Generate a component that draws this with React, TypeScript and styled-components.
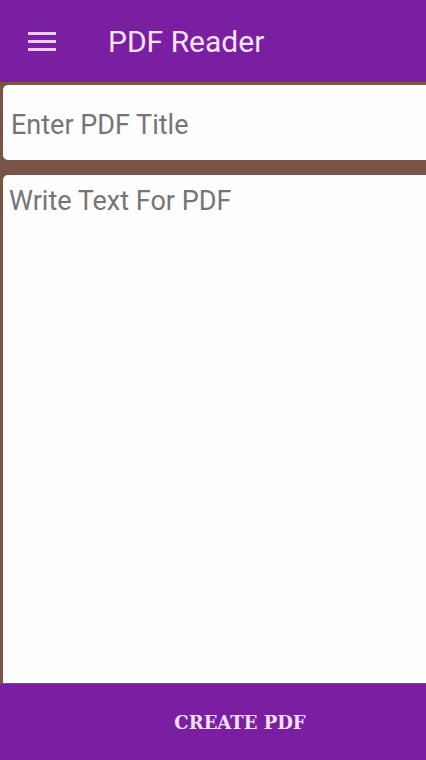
import React from 'react';
import styled, { createGlobalStyle } from 'styled-components';

const GlobalStyle = createGlobalStyle`
  html, body {
    margin: 0;
    padding: 0;
    height: 100%;
  }
  #root {
    height: 100%;
  }
`;

const Screen = styled.div`
  display: flex;
  flex-direction: column;
  height: 760px;
  width: 426px;
  background: #795548;
  overflow: hidden;
`;

const AppBar = styled.header`
  display: flex;
  align-items: center;
  height: 82px;
  flex-shrink: 0;
  background: #7b1fa2;
  padding-left: 28px;
  box-sizing: border-box;
`;

const MenuButton = styled.div`
  display: flex;
  flex-direction: column;
  gap: 5px;
  width: 28px;
  margin-right: 52px;
`;

const MenuBar = styled.span`
  display: block;
  height: 3px;
  background: #f0c8f4;
`;

const AppTitle = styled.h1`
  margin: 0;
  font-family: Roboto, 'Noto Sans', sans-serif;
  font-weight: 400;
  font-size: 30px;
  color: #f8e4f8;
`;

const Body = styled.main`
  flex: 1;
  display: flex;
  flex-direction: column;
  gap: 15px;
  padding: 3px 0 1px 3px;
  min-height: 0;
`;

const TitleInput = styled.input`
  height: 75px;
  flex-shrink: 0;
  box-sizing: border-box;
  border: none;
  outline: none;
  border-radius: 5px 0 0 5px;
  background: #fefefe;
  padding: 4px 8px 0;
  font-family: Roboto, 'Noto Sans', sans-serif;
  font-size: 27px;
  color: #333;

  &::placeholder {
    color: #757575;
  }
`;

const TextInput = styled.textarea`
  flex: 1;
  box-sizing: border-box;
  border: none;
  outline: none;
  resize: none;
  border-radius: 5px 0 0 0;
  background: #fefefe;
  padding: 10px 6px;
  font-family: Roboto, 'Noto Sans', sans-serif;
  font-size: 27px;
  line-height: 32px;
  color: #333;

  &::placeholder {
    color: #757575;
  }
`;

const Footer = styled.footer`
  height: 76px;
  flex-shrink: 0;
  display: flex;
  align-items: center;
  justify-content: center;
  background: #7b1fa2;
  padding-left: 54px;
  box-sizing: border-box;
`;

const CreateButton = styled.button`
  border: none;
  background: transparent;
  padding: 0;
  font-family: 'DejaVu Serif', 'Liberation Serif', serif;
  font-weight: 700;
  font-size: 18px;
  color: #f8e0f8;
  cursor: pointer;
`;

export default function App() {
  return (
    <>
      <GlobalStyle />
      <Screen>
        <AppBar>
          <MenuButton>
            <MenuBar />
            <MenuBar />
            <MenuBar />
          </MenuButton>
          <AppTitle>PDF Reader</AppTitle>
        </AppBar>
        <Body>
          <TitleInput placeholder="Enter PDF Title" />
          <TextInput placeholder="Write Text For PDF" />
        </Body>
        <Footer>
          <CreateButton>CREATE PDF</CreateButton>
        </Footer>
      </Screen>
    </>
  );
}
